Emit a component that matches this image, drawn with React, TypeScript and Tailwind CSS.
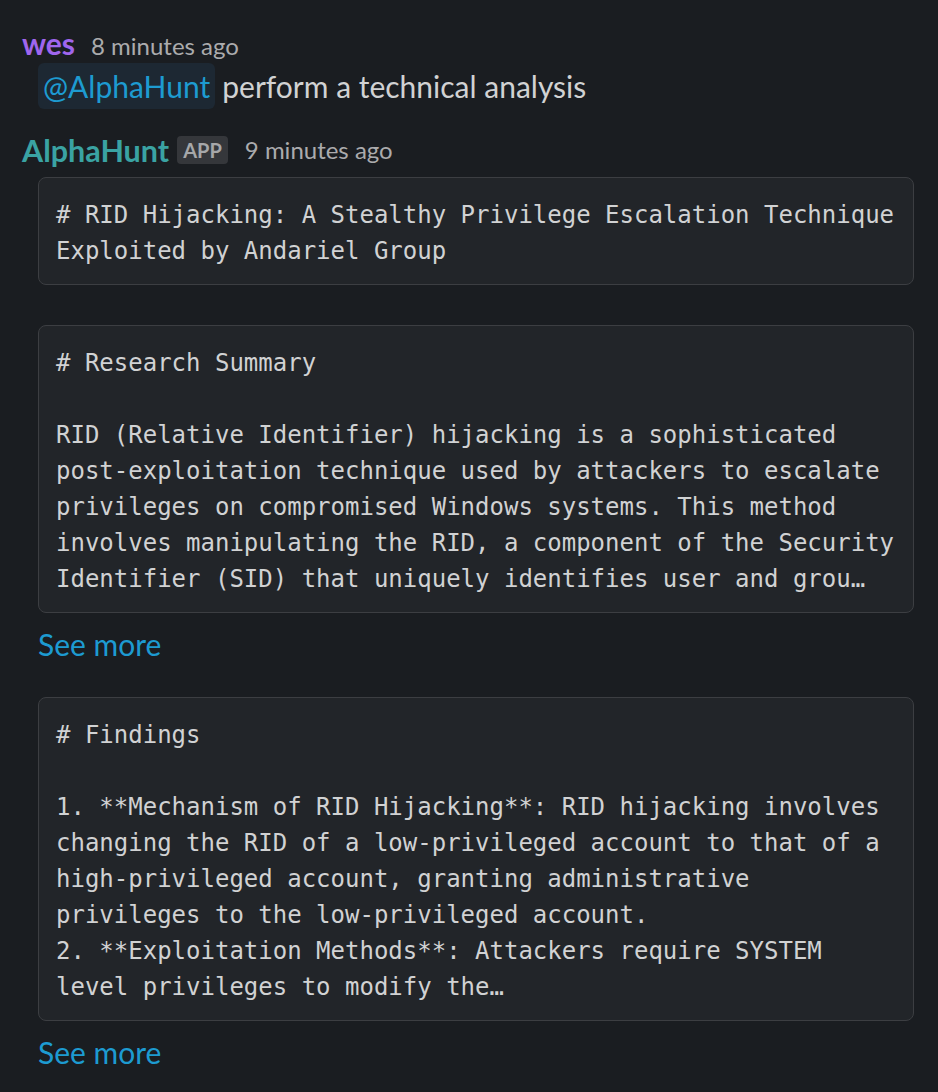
import React from "react";

const mono = "font-['DejaVu_Sans_Mono','Liberation_Mono',monospace]";

function CodeBlock({ lines }: { lines: string[] }) {
  return (
    <div
      className={`rounded-[8px] border border-[#3c3e42] bg-[#222529] px-[17px] pt-[19px] pb-[15px] text-[24px] leading-[36px] text-[#d1d2d3] ${mono}`}
    >
      {lines.map((l, i) => (
        <div key={i} className="whitespace-pre">
          {l === "" ? "\u00a0" : l}
        </div>
      ))}
    </div>
  );
}

function SeeMore() {
  return (
    <div className="mt-[9px] text-[30px] leading-[44px] text-[#1d9bd1]">See more</div>
  );
}

export default function App() {
  return (
    <div className="min-h-[1092px] w-[938px] bg-[#1a1d21] font-['Lato','Noto_Sans',sans-serif] text-[#d1d2d3]">
      <div className="pl-[22px] pr-[24px] pt-[25px]">
        <div className="flex items-baseline gap-[16px]">
          <span className="text-[30px] font-bold leading-[36px] text-[#a066ee]">wes</span>
          <span className="text-[24px] leading-[36px] text-[#ababad]">8 minutes ago</span>
        </div>
        <div className="mt-[-1px] flex items-center pl-[16px]">
          <span className="rounded-[6px] bg-[#1d2833] px-[5px] text-[30px] leading-[46px] text-[#1d9bd1]">
            @AlphaHunt
          </span>
          <span className="ml-[7px] text-[30px] leading-[46px] text-[#d1d2d3]">
            perform a technical analysis
          </span>
        </div>
        <div className="mt-[23px] flex items-center">
          <span className="text-[30.5px] font-bold leading-[36px] text-[#3aa3a3]">AlphaHunt</span>
          <span className="ml-[8px] rounded-[4px] bg-[#35373b] px-[6px] text-[20px] font-bold leading-[28px] text-[#a6a7a9]">
            APP
          </span>
          <span className="ml-[17px] text-[24px] leading-[36px] text-[#ababad]">9 minutes ago</span>
        </div>
        <div className="mt-[9px] pl-[16px]">
          <CodeBlock
            lines={[
              "# RID Hijacking: A Stealthy Privilege Escalation Technique",
              "Exploited by Andariel Group",
            ]}
          />
          <div className="mt-[40px]">
            <CodeBlock
              lines={[
                "# Research Summary",
                "",
                "RID (Relative Identifier) hijacking is a sophisticated",
                "post-exploitation technique used by attackers to escalate",
                "privileges on compromised Windows systems. This method",
                "involves manipulating the RID, a component of the Security",
                "Identifier (SID) that uniquely identifies user and grou…",
              ]}
            />
          </div>
          <SeeMore />
          <div className="mt-[31px]">
            <CodeBlock
              lines={[
                "# Findings",
                "",
                "1. **Mechanism of RID Hijacking**: RID hijacking involves",
                "changing the RID of a low-privileged account to that of a",
                "high-privileged account, granting administrative",
                "privileges to the low-privileged account.",
                "2. **Exploitation Methods**: Attackers require SYSTEM",
                "level privileges to modify the…",
              ]}
            />
          </div>
          <SeeMore />
        </div>
      </div>
    </div>
  );
}
